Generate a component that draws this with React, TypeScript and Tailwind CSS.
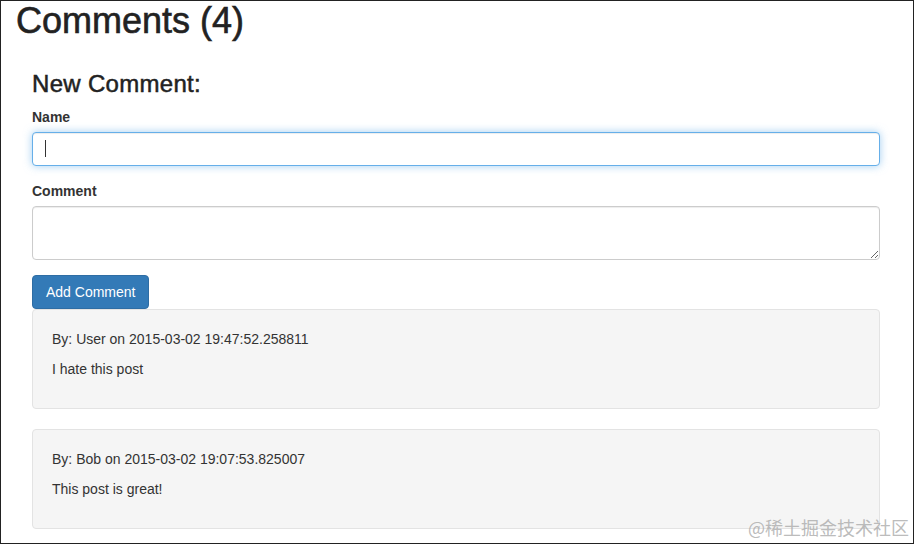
import React from "react";

type comment = {
  author: string;
  date: string;
  text: string;
};

const comments: comment[] = [
  { author: "User", date: "2015-03-02 19:47:52.258811", text: "I hate this post" },
  { author: "Bob", date: "2015-03-02 19:07:53.825007", text: "This post is great!" },
];

const CommentCard = ({ author, date, text }: comment) => {
  return (
    <div className="bg-[#f5f5f5] border border-[#e3e3e3] rounded-[4px] p-[19px] mb-[20px]">
      <p className="leading-[20px] mb-[10px]">By: {author} on {date}</p>
      <p className="leading-[20px] mb-[10px]">{text}</p>
    </div>
  );
};

export default function App() {
  const [name, setName] = React.useState("");
  const [body, setBody] = React.useState("");

  return (
    <div
      className="relative w-[914px] h-[544px] border border-[#222] bg-white overflow-hidden text-[14px] text-[#333] pl-[15px] pr-[15px]"
      style={{ fontFamily: '"Liberation Sans", Arial, sans-serif' }}
    >
      <h1 className="text-[36px] leading-[39.6px] text-[#222] mt-0 [-webkit-text-stroke:0.6px_#222]">Comments (4)</h1>

      <div className="pl-[16px] pr-[18px]">
        <h3 className="text-[24px] leading-[26.4px] text-[#222] mt-[30px] mb-[10px] tracking-[0.3px] [-webkit-text-stroke:0.5px_#222]">
          New Comment:
        </h3>

        <div className="mb-[15px]">
          <label className="block font-bold leading-[20px] mb-[5px]">Name</label>
          <div className="relative">
            <input
              value={name}
              onChange={(e) => setName(e.target.value)}
              className="block w-full h-[34px] px-[12px] py-[6px] bg-white border border-[#66afe9] rounded-[4px] outline-none shadow-[inset_0_1px_1px_rgba(0,0,0,0.075),0_0_8px_rgba(102,175,233,0.6)]"
            />
            <span className="absolute left-[13px] top-[8px] w-px h-[17px] bg-[#333]" />
          </div>
        </div>

        <div className="mb-[15px]">
          <label className="block font-bold leading-[20px] mb-[5px]">Comment</label>
          <textarea
            rows={2}
            value={body}
            onChange={(e) => setBody(e.target.value)}
            className="block w-full h-[54px] px-[12px] py-[6px] bg-white border border-[#ccc] rounded-[4px] outline-none leading-[20px] shadow-[inset_0_1px_1px_rgba(0,0,0,0.075)]"
          />
        </div>

        <button className="h-[34px] px-[13px] bg-[#337ab7] border border-[#2e6da4] rounded-[4px] text-white leading-[20px]">
          Add Comment
        </button>

        {comments.map((c) => (
          <CommentCard key={c.date} {...c} />
        ))}
      </div>

      <span
        className="absolute right-[4px] bottom-[6px] text-[18px] leading-[20px] text-[#aaa]/80"
        style={{ fontFamily: '"Noto Sans CJK SC", sans-serif' }}
      >
        @稀土掘金技术社区
      </span>
    </div>
  );
}
